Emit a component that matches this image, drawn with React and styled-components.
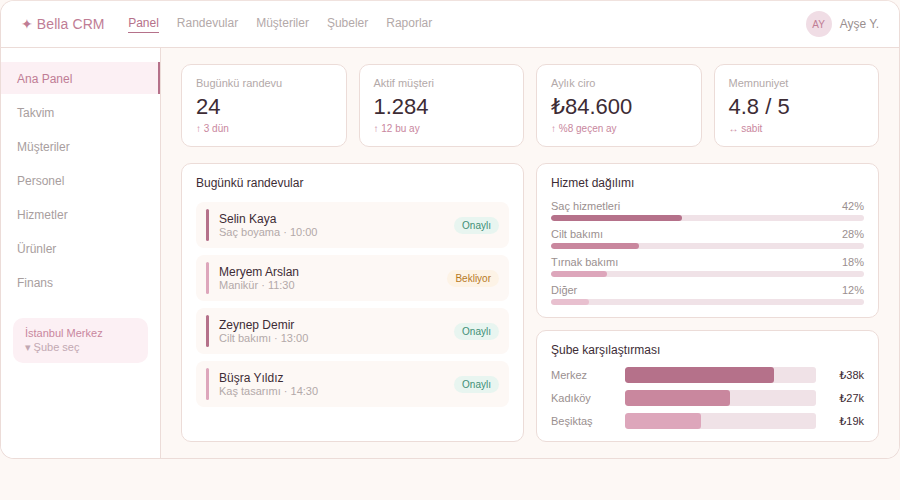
import React from 'react';
import styled, { createGlobalStyle } from 'styled-components';

const GlobalStyle = createGlobalStyle`
  html, body {
    margin: 0;
    padding: 0;
    background: #fdf8f5;
    font-family: "Liberation Sans", "DejaVu Sans", Arial, sans-serif;
  }
  * {
    box-sizing: border-box;
  }
`;

const Frame = styled.div`
  width: 900px;
  height: 459px;
  background: #ffffff;
  border: 1px solid #ecdcd8;
  border-top-color: #f0e2de;
  border-radius: 14px;
  overflow: hidden;
  display: flex;
  flex-direction: column;
`;

const TopBar = styled.header`
  height: 47px;
  flex: none;
  display: flex;
  align-items: center;
  padding: 0 20px;
  border-bottom: 1px solid #ecdcd8;
  background: #ffffff;
`;

const Logo = styled.div`
  font-size: 14px;
  letter-spacing: 0.1px;
  color: #c07d95;
  margin-right: 23.5px;
  white-space: nowrap;
`;

const TopNav = styled.nav`
  display: flex;
  gap: 18px;
  flex: 1;
`;

const TopLink = styled.a`
  font-size: 12px;
  line-height: 14px;
  padding-bottom: 2px;
  color: ${(p) => (p.$active ? '#b5718a' : '#b3a9a9')};
  border-bottom: 1px solid ${(p) => (p.$active ? '#b5718a' : 'transparent')};
`;

const User = styled.div`
  display: flex;
  align-items: center;
  gap: 8px;
`;

const Avatar = styled.div`
  width: 26px;
  height: 26px;
  border-radius: 50%;
  background: #f0dde5;
  color: #c07d95;
  font-size: 10px;
  display: flex;
  align-items: center;
  justify-content: center;
`;

const UserName = styled.span`
  font-size: 12px;
  color: #9a8f8f;
`;

const Body = styled.div`
  flex: 1;
  display: flex;
  min-height: 0;
`;

const Sidebar = styled.aside`
  width: 160px;
  flex: none;
  background: #ffffff;
  border-right: 1px solid #ecdcd8;
  padding-top: 14px;
`;

const SideItem = styled.div`
  height: 32px;
  margin-bottom: 2px;
  padding: 1px 0 0 16px;
  display: flex;
  align-items: center;
  font-size: 12px;
  color: ${(p) => (p.$active ? '#c07d95' : '#a89e9e')};
  background: ${(p) => (p.$active ? '#fcf0f4' : 'transparent')};
  border-right: 2px solid ${(p) => (p.$active ? '#b5718a' : 'transparent')};
`;

const BranchBox = styled.div`
  margin: 20px 12px 0;
  height: 45px;
  padding: 8px 12px;
  border-radius: 10px;
  background: #fcf0f4;
  font-size: 11px;
  line-height: 14px;
`;

const BranchName = styled.div`
  color: #c9879e;
`;

const BranchHint = styled.div`
  color: #c2a8b2;
`;

const Main = styled.main`
  flex: 1;
  min-width: 0;
  background: #fdf8f5;
  padding: 16px 20px;
  display: flex;
  flex-direction: column;
  gap: 16px;
`;

const StatRow = styled.div`
  display: grid;
  grid-template-columns: repeat(4, 1fr);
  gap: 12px;
`;

const Card = styled.section`
  background: #ffffff;
  border: 1px solid #ecdcd8;
  border-radius: 10px;
`;

const StatCard = styled(Card)`
  height: 83px;
  padding: 12px 14px;
`;

const StatLabel = styled.div`
  font-size: 11px;
  line-height: 13px;
  color: #b3a9a9;
`;

const StatValue = styled.div`
  font-size: 22px;
  line-height: 26px;
  margin-top: 4px;
  color: #3d2c35;
`;

const StatNote = styled.div`
  font-size: 10px;
  line-height: 12px;
  margin-top: 3px;
  color: #c9879e;
`;

const Columns = styled.div`
  flex: 1;
  min-height: 0;
  display: grid;
  grid-template-columns: 1fr 1fr;
  gap: 12px;
`;

const Panel = styled(Card)`
  padding: 12px 14px;
`;

const SideStack = styled.div`
  display: flex;
  flex-direction: column;
  gap: 12px;
`;

const PanelTitle = styled.h3`
  margin: 0 0 10px;
  font-size: 12px;
  line-height: 14px;
  font-weight: 400;
  color: #3d2c35;
`;

const ApptList = styled.div`
  display: flex;
  flex-direction: column;
  gap: 7px;
  margin-top: 12px;
`;

const Appt = styled.div`
  height: 46px;
  background: #fdf8f5;
  border-radius: 8px;
  padding: 0 10px;
  display: flex;
  align-items: center;
  gap: 10px;
`;

const ApptMark = styled.div`
  width: 3px;
  height: 32px;
  border-radius: 2px;
  background: ${(p) => p.$color};
`;

const ApptText = styled.div`
  flex: 1;
`;

const ApptName = styled.div`
  font-size: 12px;
  line-height: 14px;
  color: #3d2c35;
`;

const ApptMeta = styled.div`
  font-size: 11px;
  line-height: 13px;
  color: #b3a9a9;
`;

const Badge = styled.span`
  font-size: 10px;
  line-height: 17px;
  padding: 0 8px;
  border-radius: 9px;
  color: ${(p) => (p.$wait ? '#b7791f' : '#3f8f75')};
  background: ${(p) => (p.$wait ? '#fdf3e6' : '#e8f5f0')};
`;

const ServiceList = styled.div`
  display: flex;
  flex-direction: column;
  gap: 7px;
`;

const ServiceHead = styled.div`
  display: flex;
  justify-content: space-between;
  font-size: 11px;
  line-height: 13px;
  color: #9a8f8f;
  margin-bottom: 2px;
`;

const Track = styled.div`
  background: #f0e2e7;
  overflow: hidden;
  height: ${(p) => p.$height}px;
  border-radius: ${(p) => p.$radius}px;
`;

const Fill = styled.div`
  height: 100%;
  background: ${(p) => p.$color};
  border-radius: ${(p) => p.$radius}px;
`;

const BranchRow = styled.div`
  display: grid;
  grid-template-columns: 74px 191px 1fr;
  align-items: center;
  font-size: 11px;
  color: #9a8f8f;
`;

const BranchList = styled.div`
  display: flex;
  flex-direction: column;
  gap: 7px;
`;

const BranchValue = styled.span`
  text-align: right;
  color: #3d2c35;
`;

const stats = [
  { label: 'Bugünkü randevu', value: '24', note: '↑ 3 dün' },
  { label: 'Aktif müşteri', value: '1.284', note: '↑ 12 bu ay' },
  { label: 'Aylık ciro', value: '₺84.600', note: '↑ %8 geçen ay' },
  { label: 'Memnuniyet', value: '4.8 / 5', note: '↔ sabit' },
];

const appointments = [
  { name: 'Selin Kaya', meta: 'Saç boyama · 10:00', color: '#b5718a' },
  { name: 'Meryem Arslan', meta: 'Manikür · 11:30', color: '#dda6bb', wait: true },
  { name: 'Zeynep Demir', meta: 'Cilt bakımı · 13:00', color: '#b5718a' },
  { name: 'Büşra Yıldız', meta: 'Kaş tasarımı · 14:30', color: '#dda6bb' },
];

const services = [
  { name: 'Saç hizmetleri', pct: 42, color: '#b5718a' },
  { name: 'Cilt bakımı', pct: 28, color: '#c9879e' },
  { name: 'Tırnak bakımı', pct: 18, color: '#dda6bb' },
  { name: 'Diğer', pct: 12, color: '#e8c0cf' },
];

const branches = [
  { name: 'Merkez', value: '₺38k', pct: 78, color: '#b5718a' },
  { name: 'Kadıköy', value: '₺27k', pct: 55, color: '#c9879e' },
  { name: 'Beşiktaş', value: '₺19k', pct: 40, color: '#dda6bb' },
];

const topLinks = ['Panel', 'Randevular', 'Müşteriler', 'Şubeler', 'Raporlar'];
const sideLinks = ['Ana Panel', 'Takvim', 'Müşteriler', 'Personel', 'Hizmetler', 'Ürünler', 'Finans'];

export default function App() {
  return (
    <>
      <GlobalStyle />
      <Frame>
        <TopBar>
          <Logo>✦ Bella CRM</Logo>
          <TopNav>
            {topLinks.map((link, i) => (
              <TopLink key={link} $active={i === 0}>{link}</TopLink>
            ))}
          </TopNav>
          <User>
            <Avatar>AY</Avatar>
            <UserName>Ayşe Y.</UserName>
          </User>
        </TopBar>
        <Body>
          <Sidebar>
            {sideLinks.map((link, i) => (
              <SideItem key={link} $active={i === 0}>{link}</SideItem>
            ))}
            <BranchBox>
              <BranchName>İstanbul Merkez</BranchName>
              <BranchHint>▾ Şube seç</BranchHint>
            </BranchBox>
          </Sidebar>
          <Main>
            <StatRow>
              {stats.map((s) => (
                <StatCard key={s.label}>
                  <StatLabel>{s.label}</StatLabel>
                  <StatValue>{s.value}</StatValue>
                  <StatNote>{s.note}</StatNote>
                </StatCard>
              ))}
            </StatRow>
            <Columns>
              <Panel>
                <PanelTitle>Bugünkü randevular</PanelTitle>
                <ApptList>
                  {appointments.map((a) => (
                    <Appt key={a.name}>
                      <ApptMark $color={a.color} />
                      <ApptText>
                        <ApptName>{a.name}</ApptName>
                        <ApptMeta>{a.meta}</ApptMeta>
                      </ApptText>
                      <Badge $wait={a.wait}>{a.wait ? 'Bekliyor' : 'Onaylı'}</Badge>
                    </Appt>
                  ))}
                </ApptList>
              </Panel>
              <SideStack>
                <Panel>
                  <PanelTitle>Hizmet dağılımı</PanelTitle>
                  <ServiceList>
                    {services.map((s) => (
                      <div key={s.name}>
                        <ServiceHead>
                          <span>{s.name}</span>
                          <span>{s.pct}%</span>
                        </ServiceHead>
                        <Track $height={6} $radius={3}>
                          <Fill $color={s.color} $radius={3} style={{ width: `${s.pct}%` }} />
                        </Track>
                      </div>
                    ))}
                  </ServiceList>
                </Panel>
                <Panel>
                  <PanelTitle>Şube karşılaştırması</PanelTitle>
                  <BranchList>
                    {branches.map((b) => (
                      <BranchRow key={b.name}>
                        <span>{b.name}</span>
                        <Track $height={16} $radius={3}>
                          <Fill $color={b.color} $radius={3} style={{ width: `${b.pct}%` }} />
                        </Track>
                        <BranchValue>{b.value}</BranchValue>
                      </BranchRow>
                    ))}
                  </BranchList>
                </Panel>
              </SideStack>
            </Columns>
          </Main>
        </Body>
      </Frame>
    </>
  );
}
